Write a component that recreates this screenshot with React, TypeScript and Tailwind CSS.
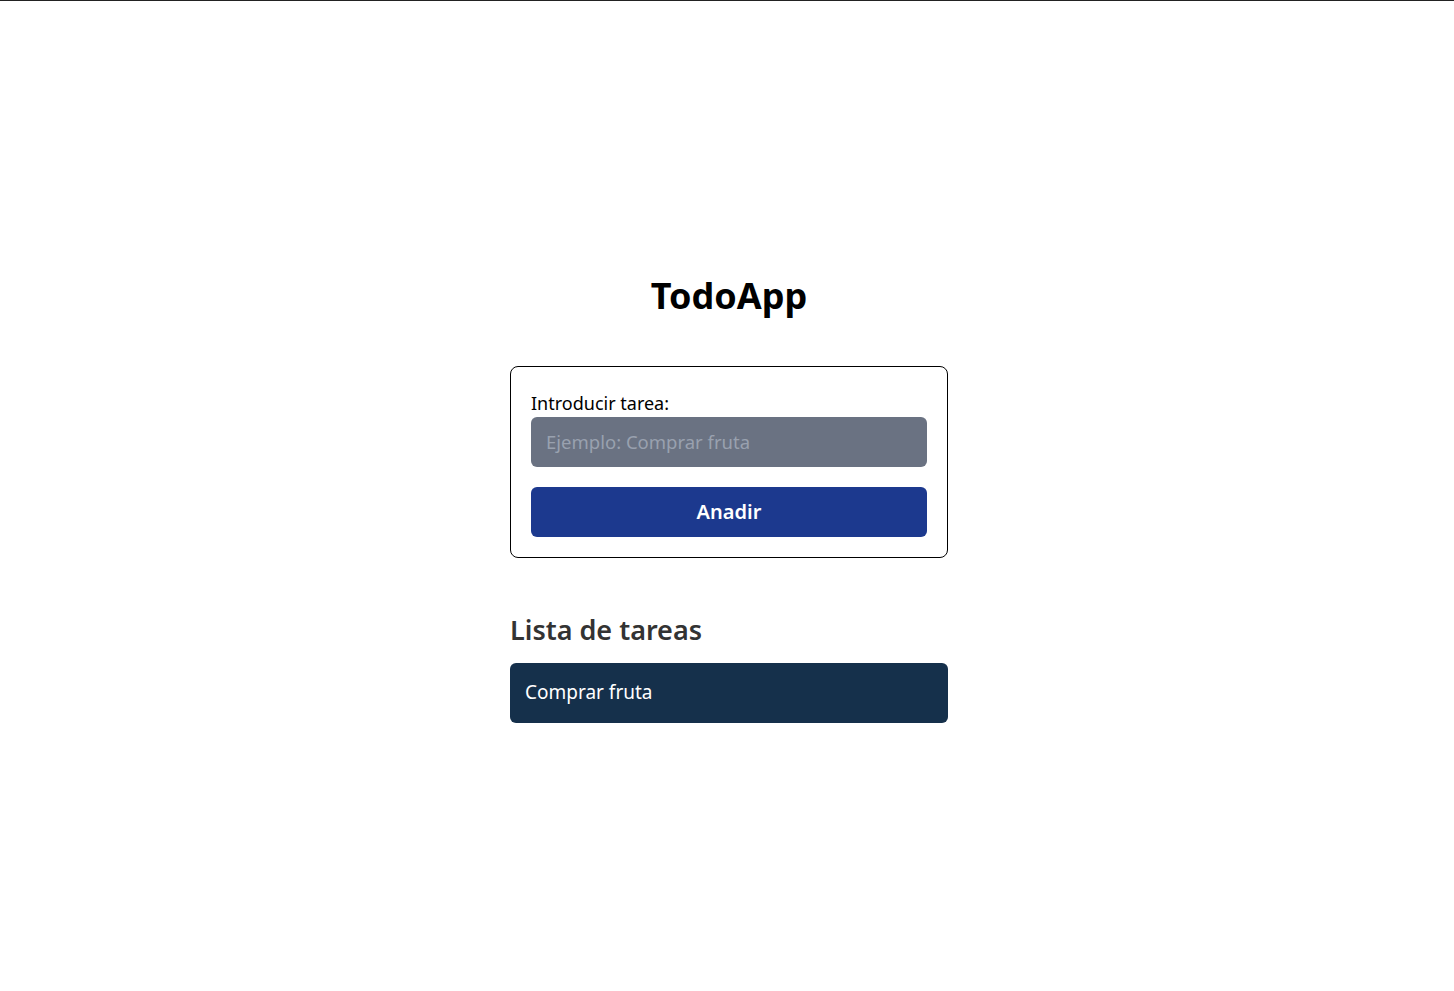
export default function App() {
  const tareas = ["Comprar fruta"]

  return (
    <div
      className="min-h-screen border-t border-[#222] bg-white flex flex-col items-center justify-center pt-[2px] pl-[4px]"
      style={{ fontFamily: '"Noto Sans", "Open Sans", sans-serif' }}
    >
      <h1 className="text-4xl font-bold text-black leading-[48px]">TodoApp</h1>

      <div className="mt-[46px] w-[438px] rounded-lg border border-black px-5 pt-[22px] pb-5">
        <label className="block text-lg leading-[28px] text-black">Introducir tarea:</label>
        <input
          className="w-full h-[50px] rounded-md bg-gray-500 px-[15px] text-[18.5px] text-white placeholder:text-gray-400 outline-none"
          placeholder="Ejemplo: Comprar fruta"
        />
        <button className="mt-5 w-full h-[50px] rounded-md bg-blue-900 text-xl font-semibold text-white">
          Anadir
        </button>
      </div>

      <div className="mt-[54px] w-[438px]">
        <h2 className="text-[27px] font-semibold text-[#333] leading-[36px]">Lista de tareas</h2>
        <ul className="mt-[15px] flex flex-col gap-2">
          {tareas.map((t) => (
            <li key={t} className="h-[60px] flex items-center rounded-md bg-[#15304b] px-[15px] text-[19px] text-white">
              {t}
            </li>
          ))}
        </ul>
      </div>
    </div>
  )
}
